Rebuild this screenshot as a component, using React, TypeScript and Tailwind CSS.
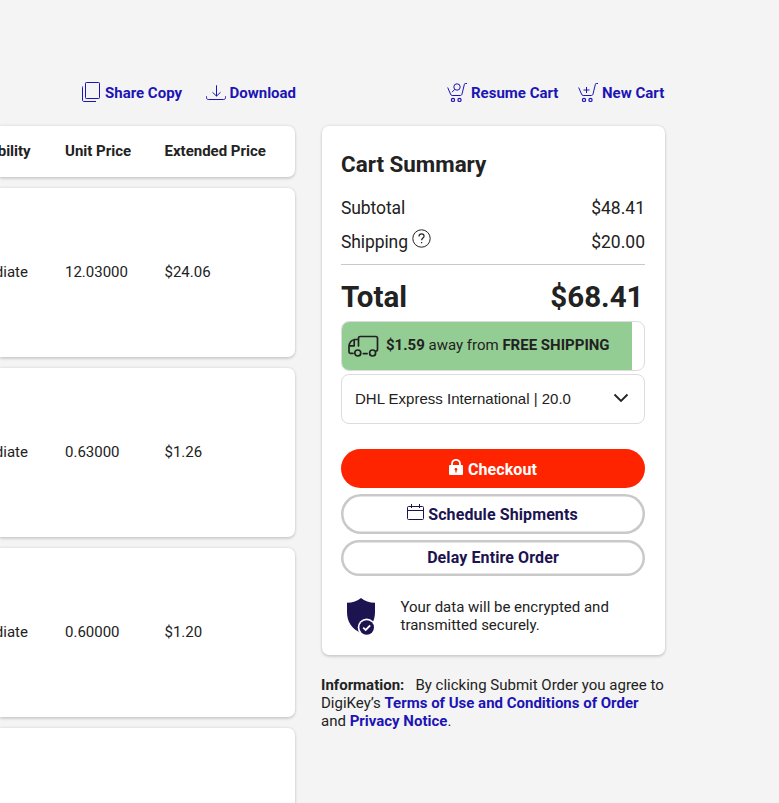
import type { ReactNode } from "react";

const CARD = "bg-white shadow-[0_0_3px_rgba(0,0,0,0.14),0_2px_3px_rgba(0,0,0,0.12)]";

function CopyIcon() {
  return (
    <svg className="mr-[3px] h-[22px] w-[20px]" viewBox="0 0 20 22" fill="none" stroke="#1c14b4">
      <rect x="3.5" y="0.5" width="14" height="16" rx="0.8" />
      <path d="M1 4.500c-.4 0-.5.3-.5.8V18c0 1 .6 1.500 1.500 1.500h12" />
    </svg>
  );
}

function DownloadIcon() {
  return (
    <svg className="mr-[4px] h-[16px] w-[20px]" viewBox="0 0 20 16" fill="none" stroke="#1c14b4">
      <path d="M10.500 .3V11M6.500 7.300l4 3.800 4-3.800M.5 11.300v1.400c0 1 .7 1.800 1.800 1.800h15.400c1.100 0 1.800-.8 1.800-1.800v-1.400" />
    </svg>
  );
}

function CartIcon({ children }: { children: ReactNode }) {
  return (
    <svg className="-mt-[1px] mr-[4px] h-[21px] w-[20px]" viewBox="0 0 20 21" fill="none" stroke="#1c14b4">
      <path d="M20 1.500h-1.700c-.5 0-.8.2-.9.8l-2.400 9.700c-.3 1-.7 1.500-1.600 1.500H5.200c-.9 0-1.400-.5-1.700-1.400L.700 5.500" />
      <circle cx="6" cy="17.900" r="1.600" strokeWidth="1.200" />
      <circle cx="12.500" cy="17.900" r="1.600" strokeWidth="1.200" />
      {children}
    </svg>
  );
}

function Toolbar({ children }: { children: ReactNode }) {
  return (
    <div className="flex h-[22px] items-center justify-end text-[15px] font-bold leading-[22px] text-[#1c14b4]">
      {children}
    </div>
  );
}

function Item({ unit, total }: { unit: string; total: string }) {
  return (
    <div className={`${CARD} mt-[11px] flex h-[169px] items-center rounded-r-[7px] text-[15px]`}>
      <span className="flex w-[65px]">
        <span className="-ml-[43.5px]">Immediate</span>
      </span>
      <span className="w-[99.5px]">{unit}</span>
      <span>{total}</span>
    </div>
  );
}

export default function App() {
  return (
    <div className="flex h-[803px] w-[779px] overflow-hidden bg-[#f4f4f4] font-['Roboto','Liberation_Sans',sans-serif] text-[#222]">
      <section className="w-[295px] shrink-0 pt-[82px]">
        <Toolbar>
          <CopyIcon />
          <span className="mr-[23px] w-[77.500px] whitespace-nowrap">Share Copy</span>
          <DownloadIcon />
          <span className="w-[65.500px] whitespace-nowrap">Download</span>
        </Toolbar>
        <div className={`${CARD} mt-[22px] flex h-[51px] items-center rounded-r-[7px] text-[15px] font-bold`}>
          <span className="flex w-[65px]">
            <span className="-ml-[43.5px]">Availability</span>
          </span>
          <span className="w-[99.5px]">Unit Price</span>
          <span>Extended Price</span>
        </div>
        <Item unit="12.03000" total="$24.06" />
        <Item unit="0.63000" total="$1.26" />
        <Item unit="0.60000" total="$1.20" />
        <div className={`${CARD} mt-[11px] h-[169px] rounded-r-[7px]`} />
      </section>

      <section className="ml-[27px] w-[342.5px] shrink-0 pt-[82px]">
        <Toolbar>
          <CartIcon>
            <circle cx="10" cy="5" r="3.200" />
            <path d="M7.800 7.300 5 10.200" />
          </CartIcon>
          <span className="mr-[19px] w-[88px] whitespace-nowrap">Resume Cart</span>
          <CartIcon>
            <path d="M8.500 5v6M5.500 8h6" />
          </CartIcon>
          <span className="w-[62.5px] whitespace-nowrap">New Cart</span>
        </Toolbar>

        <div className={`${CARD} mt-[22px] h-[529px] rounded-[7px] pl-[19px] pr-[19.5px] pt-[22px]`}>
          <h1 className="h-[46px] text-[22.4px] font-bold leading-[32px]">Cart Summary</h1>
          <div className="flex h-[34px] justify-between text-[17.5px] leading-[28px]">
            <span className="tracking-[-0.1px]">Subtotal</span>
            <span>$48.41</span>
          </div>
          <div className="flex h-[37px] justify-between border-b border-[#c9c9c9] text-[17.5px] leading-[28px]">
            <span className="flex tracking-[-0.1px]">
              Shipping
              <svg className="ml-[4px] mt-[1px] h-[19px] w-[19px]" viewBox="0 0 19 19" fill="none" stroke="#222">
                <circle cx="9.500" cy="9.500" r="8.700" />
                <path d="M7 7.500c0-1.700 1.100-2.700 2.600-2.700s2.500 1 2.500 2.300c0 1.800-2.500 2-2.500 4.200M9.600 13v1.300" strokeWidth="1.200" />
              </svg>
            </span>
            <span>$20.00</span>
          </div>
          <div className="flex h-[56px] justify-between pr-[1.5px] pt-[12px] text-[29.5px] font-bold leading-[40px]">
            <span>Total</span>
            <span>$68.41</span>
          </div>
          <div className="h-[50px] overflow-hidden rounded-[8px] border border-[#dcdcdc]">
            <div className="flex h-full w-[290px] items-center bg-[#93cd93] pb-[2px] pl-[6px] text-[15px]">
              <svg className="mr-[7px] mt-[1px] h-[22px] w-[31px]" viewBox="0 0 31 22" fill="none" stroke="#222" strokeWidth="1.700" strokeLinecap="round" strokeLinejoin="round">
                <path d="M10.500 11V3.200c0-1 .7-1.700 1.700-1.700h15.600c1 0 1.700.7 1.700 1.700v11c0 1-.5 1.800-1.500 1.800M10.500 4.500H6.800C3.500 4.500 1 8 1 11.500V17c0 .8.600 1.300 1.400 1.300H5M1.200 10.800h5V4.700" />
                <circle cx="9.800" cy="18" r="3" />
                <circle cx="24.600" cy="18" r="3" />
                <path d="M15.300 18.600h3.800" />
              </svg>
              <span className="whitespace-pre"><b>$1.59</b> away from <b>FREE SHIPPING</b></span>
            </div>
          </div>
          <div className="mt-[3px] flex h-[50px] items-center justify-between rounded-[8px] border border-[#dcdcdc] pl-[13px] pr-[15px] font-['Liberation_Sans',sans-serif] text-[15px]">
            <span>DHL Express International | 20.0</span>
            <svg className="-mt-[2px] h-[10px] w-[16px]" viewBox="0 0 16 10" fill="none" stroke="#222" strokeWidth="1.800">
              <path d="m1.500 1.500 6.500 6.500L14.500 1.500" />
            </svg>
          </div>

          <button className="mt-[25px] flex h-[39px] w-full items-center justify-center rounded-full bg-[#ff2400] pt-[2px] text-[16px] font-bold tracking-[0.1px] text-white">
            <svg className="-mt-[6px] mr-[5px] h-[16px] w-[14px]" viewBox="0 0 14 16">
              <path d="M3 8V4.800a4 4 0 0 1 8 0V8" fill="none" stroke="#fff" strokeWidth="1.800" />
              <rect x="0" y="6" width="14" height="10" rx="1" fill="#fff" />
              <circle cx="7" cy="10.300" r="1.300" fill="#ff2400" />
              <path d="M7 10v3.500" stroke="#ff2400" strokeWidth="1.200" />
            </svg>
            Checkout
          </button>
          <button className="mt-[6px] flex h-[40px] w-full items-center justify-center rounded-full pr-[1px] pt-[1px] text-[16px] font-bold tracking-[0.1px] text-[#1b1450] shadow-[inset_0_0_0_2.5px_#c9c9c9]">
            <svg className="-mt-[5px] mr-[4px] h-[17px] w-[17px]" viewBox="0 0 17 17" fill="none" stroke="#1b1450">
              <rect x=".5" y="2.500" width="16" height="13" rx="1" />
              <path d="M.5 6.500h16M4.500 0v4M12.500 0v4" />
            </svg>
            Schedule Shipments
          </button>
          <button className="mt-[6px] flex h-[36px] w-full items-center justify-center rounded-full text-[16px] font-bold tracking-[0.1px] text-[#1b1450] shadow-[inset_0_0_0_2.5px_#c9c9c9]">
            Delay Entire Order
          </button>

          <div className="mt-[22px] flex pl-[5.5px] text-[15px] leading-[18px]">
            <svg className="mr-[25px] h-[38px] w-[29px]" viewBox="0 0 29 38">
              <path d="M14 0c3.500 3 8.500 4.600 14 4.800V14c0 10-5 17-14 21C5 31 0 24 0 14V4.800C5.500 4.600 10.500 3 14 0Z" fill="#1b1450" />
              <circle cx="19.700" cy="29.500" r="9" fill="#fff" />
              <circle cx="19.700" cy="29.500" r="7.300" fill="#1b1450" />
              <path d="m16.200 29.700 2.500 2.300 4.500-4.600" fill="none" stroke="#fff" strokeWidth="1.800" />
            </svg>
            <p>Your data will be encrypted and<br />transmitted securely.</p>
          </div>
        </div>

        <p className="-ml-[1px] mt-[21px] whitespace-nowrap text-[15px] leading-[18px]">
          <b>Information:</b>&nbsp;&nbsp; By clicking Submit Order you agree to<br />
          DigiKey’s <b className="text-[#1c14b4]">Terms of Use and Conditions of Order</b><br />
          and <b className="text-[#1c14b4]">Privacy Notice</b>.
        </p>
      </section>
    </div>
  );
}
